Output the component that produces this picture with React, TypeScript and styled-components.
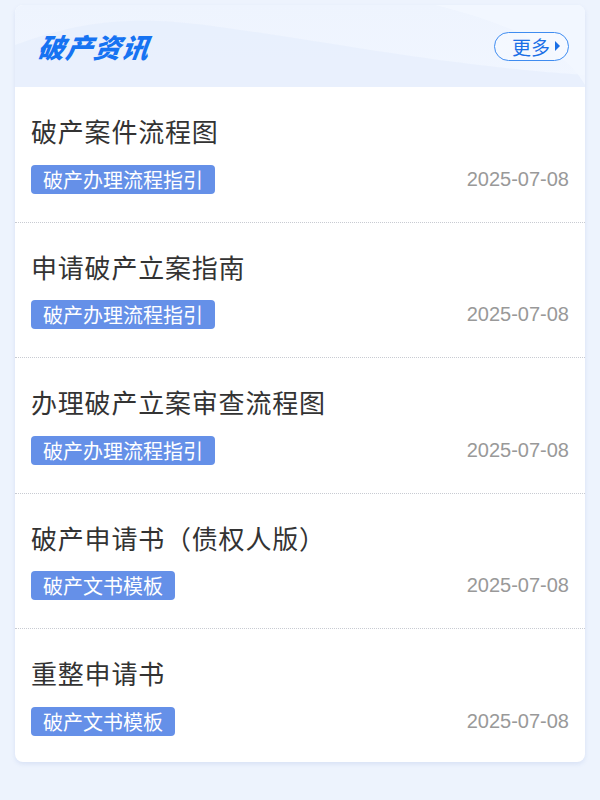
import styled, { createGlobalStyle } from "styled-components";

const items = [
  { title: "破产案件流程图", tag: "破产办理流程指引", date: "2025-07-08" },
  { title: "申请破产立案指南", tag: "破产办理流程指引", date: "2025-07-08" },
  { title: "办理破产立案审查流程图", tag: "破产办理流程指引", date: "2025-07-08" },
  { title: "破产申请书（债权人版）", tag: "破产文书模板", date: "2025-07-08" },
  { title: "重整申请书", tag: "破产文书模板", date: "2025-07-08" },
];

export default function App() {
  return (
    <>
      <GlobalStyle />
      <Page>
        <Card>
          <Header>
            <Wave viewBox="0 0 570 82" preserveAspectRatio="none">
              <path
                d="M0 82 L0 40 C60 18 110 10 190 20 C300 34 420 60 570 70 L570 82 Z"
                fill="#e6eefc"
                opacity="0.7"
              />
              <path
                d="M420 0 C500 20 550 45 570 80 L570 0 Z"
                fill="#f3f7ff"
                opacity="0.8"
              />
            </Wave>
            <HeaderTitle>破产资讯</HeaderTitle>
            <MoreButton>
              更多
              <Arrow />
            </MoreButton>
          </Header>
          <List>
            {items.map((item, index) => (
              <Item key={index}>
                <ItemTitle>{item.title}</ItemTitle>
                <ItemMeta>
                  <Tag>{item.tag}</Tag>
                  <DateText>{item.date}</DateText>
                </ItemMeta>
              </Item>
            ))}
          </List>
        </Card>
      </Page>
    </>
  );
}

const GlobalStyle = createGlobalStyle`
  body {
    margin: 0;
    background: #edf3fd;
    font-family: "Noto Sans CJK SC", "Noto Sans", sans-serif;
  }
`;

const Page = styled.div`
  width: 600px;
  min-height: 800px;
  padding: 5px 15px 0;
  box-sizing: border-box;
  background: #edf3fd;
`;

const Card = styled.div`
  background: #ffffff;
  border-radius: 8px;
  overflow: hidden;
  box-shadow: 0 2px 4px rgba(120, 150, 210, 0.18);
`;

const Header = styled.div`
  position: relative;
  height: 82px;
  display: flex;
  align-items: center;
  justify-content: space-between;
  padding: 0 16px 0 23px;
  background: linear-gradient(180deg, #eef4fe 0%, #f1f6ff 100%);
`;

const Wave = styled.svg`
  position: absolute;
  inset: 0;
  width: 100%;
  height: 100%;
`;

const HeaderTitle = styled.div`
  position: relative;
  font-size: 27px;
  font-weight: 900;
  font-style: italic;
  letter-spacing: 1px;
  color: #1673f2;
  transform: skewX(-8deg);
`;

const MoreButton = styled.div`
  position: relative;
  display: flex;
  align-items: center;
  gap: 5px;
  height: 27px;
  padding: 0 8px 0 17px;
  border: 1px solid #3f8cf0;
  border-radius: 15px;
  font-size: 19px;
  color: #1a6fe6;
  background: rgba(255, 255, 255, 0.3);
`;

const Arrow = styled.span`
  width: 0;
  height: 0;
  border-top: 5px solid transparent;
  border-bottom: 5px solid transparent;
  border-left: 5px solid #1a6fe6;
`;

const List = styled.div`
  display: flex;
  flex-direction: column;
`;

const Item = styled.div`
  display: flex;
  flex-direction: column;
  gap: 16px;
  padding: 26px 16px 28px;
  border-bottom: 1px dotted #c8cbd2;

  &:last-child {
    border-bottom: none;
    padding-bottom: 26px;
  }
`;

const ItemTitle = styled.div`
  font-size: 26px;
  line-height: 35.6px;
  color: #333333;
  letter-spacing: 0.8px;
`;

const ItemMeta = styled.div`
  display: flex;
  align-items: center;
  justify-content: space-between;
`;

const Tag = styled.span`
  display: inline-flex;
  align-items: center;
  height: 29px;
  padding: 0 12px;
  border-radius: 4px;
  background: #6590e8;
  color: #ffffff;
  font-size: 20px;
`;

const DateText = styled.span`
  font-family: "Liberation Sans", Arial, sans-serif;
  font-size: 20px;
  color: #999999;
`;
